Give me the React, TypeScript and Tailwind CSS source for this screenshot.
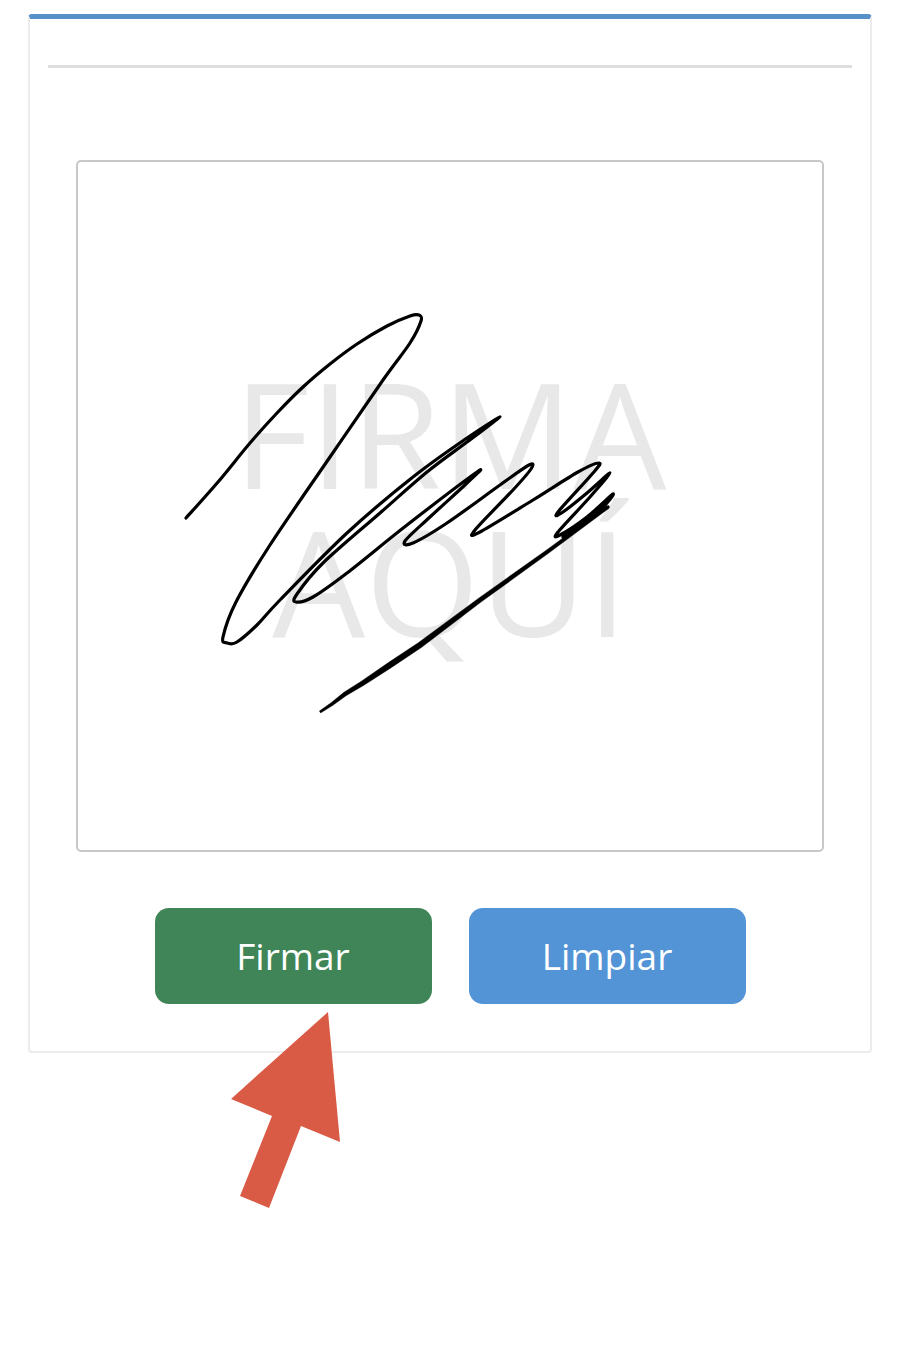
import React from "react";

type Pt = [number, number];

// signature traced from the picture, in page coordinates
const signature: Pt[] = [
	[186, 518], [218, 482], [250, 443], [277, 413], [303, 387], [330, 364], [357, 344], [387, 326],
	[410, 316], [419, 315], [421, 321], [410, 343], [383, 380], [330, 457], [270, 545], [236, 602],
	[223, 637], [227, 643], [237, 642], [257, 625], [280, 600], [347, 533], [413, 477], [467, 438], [500, 417],
	[467, 442], [427, 472], [380, 513], [323, 563], [297, 594], [296, 602], [313, 597], [347, 573], [407, 525],
	[477, 472], [467, 483], [430, 517], [405, 541], [413, 543], [447, 523], [500, 485], [529, 465],
	[531, 469], [513, 490], [475, 530], [480, 532], [533, 500], [578, 472], [599, 463], [593, 473],
	[558, 512], [563, 512], [587, 493], [610, 473], [590, 497], [558, 532], [560, 535], [587, 517],
	[613, 494], [600, 510], [563, 537], [608, 507],
];

// the tail is drawn over twice in the picture: x, y, half of its width
const tail: [number, number, number][] = [
	[608, 507, 1.6], [547, 552, 1.9], [480, 600, 2.3], [420, 645, 2.9], [390, 665, 2.9],
	[363, 683, 2.4], [345, 694, 2], [332, 704, 1.6], [320, 712, 1.1],
];

function toPath(points: Pt[]) {
	let d = `M${points[0][0]} ${points[0][1]}`;
	for (let i = 0; i < points.length - 1; i++) {
		const p0 = points[Math.max(i - 1, 0)];
		const p1 = points[i];
		const p2 = points[i + 1];
		const p3 = points[Math.min(i + 2, points.length - 1)];
		const c1x = p1[0] + (p2[0] - p0[0]) / 6;
		const c1y = p1[1] + (p2[1] - p0[1]) / 6;
		const c2x = p2[0] - (p3[0] - p1[0]) / 6;
		const c2y = p2[1] - (p3[1] - p1[1]) / 6;
		d += ` C${c1x} ${c1y} ${c2x} ${c2y} ${p2[0]} ${p2[1]}`;
	}
	return d;
}

function tailOutline() {
	const top: Pt[] = [];
	const bottom: Pt[] = [];
	tail.forEach(([x, y, w], i) => {
		const a = tail[Math.max(i - 1, 0)];
		const b = tail[Math.min(i + 1, tail.length - 1)];
		const len = Math.hypot(b[0] - a[0], b[1] - a[1]);
		const nx = -(b[1] - a[1]) / len;
		const ny = (b[0] - a[0]) / len;
		top.push([x + nx * w, y + ny * w]);
		bottom.unshift([x - nx * w, y - ny * w]);
	});
	return [...top, ...bottom].map((p) => p.join(",")).join(" ");
}

export default function App() {
	return (
		<div className="relative w-[900px] h-[1350px] bg-white pt-[14px] px-[28px] font-['Open_Sans',sans-serif] overflow-hidden">
			<div className="h-[1039px] border-2 border-[#ececec] border-t-[5px] border-t-[#5590c8] rounded-[4px] px-[18px] pt-[46px]">
				<div className="h-[3px] bg-[#dedede]" />
				<div className="relative mx-[28px] mt-[92px] h-[692px] border-2 border-[#c8c8c8] rounded-[5px] flex flex-col items-center justify-center">
					<div className="text-[147px] leading-[148px] font-normal text-[#e8e8e8] text-center">
						<div>FIRMA</div>
						<div>AQUÍ</div>
					</div>
				</div>
				<div className="flex justify-center gap-[37px] mt-[56px]">
					<button className="w-[277px] h-[96px] rounded-[14px] bg-[#408558] text-white text-[37px]">Firmar</button>
					<button className="w-[277px] h-[96px] rounded-[14px] bg-[#5294d6] text-white text-[37px]">Limpiar</button>
				</div>
			</div>
			<svg className="absolute left-0 top-0" width="900" height="1350" viewBox="0 0 900 1350" fill="none">
				<path d={toPath(signature)} stroke="#000" strokeWidth="3.2" strokeLinecap="round" strokeLinejoin="round" />
				<polygon points={tailOutline()} fill="#000" stroke="#000" strokeWidth="0.4" strokeLinejoin="round" />
				<polygon points="328,1012 340,1142 301,1126 269,1208 240,1196 272,1116 231,1099" fill="#d95a45" />
			</svg>
		</div>
	);
}
